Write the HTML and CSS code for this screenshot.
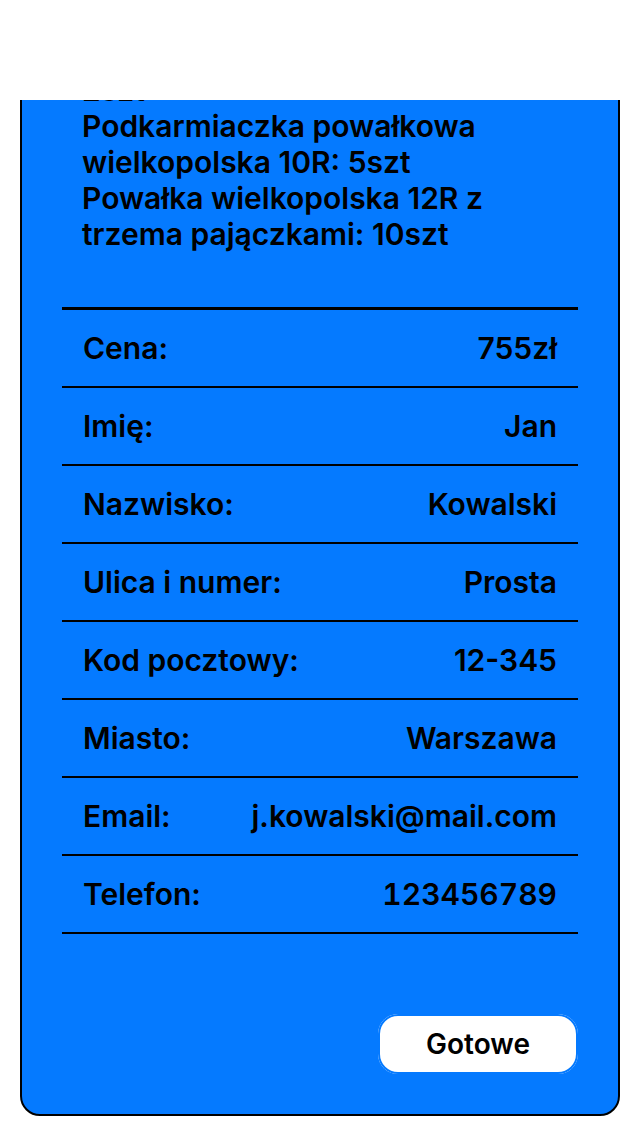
FILE: index.html
```html
<!DOCTYPE html>
<html lang="pl">
<head>
<meta charset="utf-8">
<meta name="viewport" content="width=device-width, initial-scale=1">
<title>Zamówienie</title>
<link rel="stylesheet" href="styles.css">
</head>
<body>
<main class="screen">
  <div class="viewport">
    <section class="card">
      <p class="products">2szt<br>Podkarmiaczka powałkowa wielkopolska 10R: 5szt<br>Powałka wielkopolska 12R z trzema pajączkami: 10szt</p>
      <dl class="details">
        <div class="row"><dt>Cena:</dt><dd>755zł</dd></div>
        <div class="row"><dt>Imię:</dt><dd>Jan</dd></div>
        <div class="row"><dt>Nazwisko:</dt><dd>Kowalski</dd></div>
        <div class="row"><dt>Ulica i numer:</dt><dd>Prosta</dd></div>
        <div class="row"><dt>Kod pocztowy:</dt><dd>12-345</dd></div>
        <div class="row"><dt>Miasto:</dt><dd>Warszawa</dd></div>
        <div class="row"><dt>Email:</dt><dd>j.kowalski@mail.com</dd></div>
        <div class="row"><dt>Telefon:</dt><dd class="number">123456789</dd></div>
      </dl>
      <button class="done" type="button">Gotowe</button>
    </section>
  </div>
</main>
</body>
</html>
```
FILE: styles.css
```css
* {
  box-sizing: border-box;
}

body {
  margin: 0;
  background: #fff;
  color: #000;
  font: 630 30px/36px Inter, "Noto Sans", sans-serif;
}

.screen {
  padding: 100px 20px 20px;
}

.viewport {
  overflow: hidden;
}

.card {
  display: flex;
  flex-direction: column;
  margin-top: -30px;
  padding: 0 40px 40px;
  border: 2px solid #000;
  border-radius: 20px;
  background: #057aff;
}

.products {
  margin: 0;
  padding: 0 20px 55px;
}

.details {
  margin: 0;
  border-top: 3px solid #000;
}

.row {
  display: flex;
  justify-content: space-between;
  gap: 20px;
  padding: 20px 21px;
  border-bottom: 2px solid #000;
}

.row dd {
  margin: 0;
}

.number {
  font-variant-numeric: tabular-nums;
}

.done {
  align-self: flex-end;
  width: 200px;
  height: 60px;
  margin-top: 80px;
  border: 0;
  border-radius: 20px;
  background: #fff;
  box-shadow: inset 0 0 0 2px #057aff;
  color: #000;
  font: 630 28px/36px Inter, "Noto Sans", sans-serif;
}
```
